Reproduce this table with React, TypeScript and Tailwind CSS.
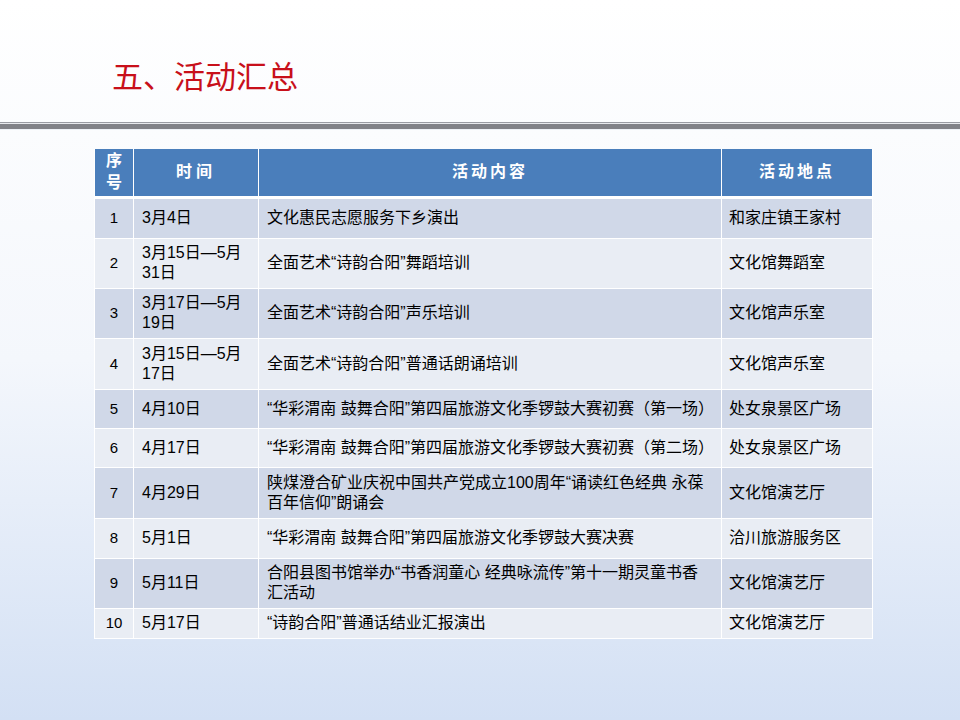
const rows = [
  { no: "1", time: "3月4日", content: "文化惠民志愿服务下乡演出", place: "和家庄镇王家村", h: "h-[41px]" },
  { no: "2", time: "3月15日—5月31日", content: "全面艺术“诗韵合阳”舞蹈培训", place: "文化馆舞蹈室", h: "h-[50px]" },
  { no: "3", time: "3月17日—5月19日", content: "全面艺术“诗韵合阳”声乐培训", place: "文化馆声乐室", h: "h-[50px]" },
  { no: "4", time: "3月15日—5月17日", content: "全面艺术“诗韵合阳”普通话朗诵培训", place: "文化馆声乐室", h: "h-[51px]" },
  { no: "5", time: "4月10日", content: "“华彩渭南 鼓舞合阳”第四届旅游文化季锣鼓大赛初赛（第一场）", place: "处女泉景区广场", h: "h-[39px]" },
  { no: "6", time: "4月17日", content: "“华彩渭南 鼓舞合阳”第四届旅游文化季锣鼓大赛初赛（第二场）", place: "处女泉景区广场", h: "h-[39px]" },
  { no: "7", time: "4月29日", content: "陕煤澄合矿业庆祝中国共产党成立100周年“诵读红色经典 永葆百年信仰”朗诵会", place: "文化馆演艺厅", h: "h-[51px]" },
  { no: "8", time: "5月1日", content: "“华彩渭南 鼓舞合阳”第四届旅游文化季锣鼓大赛决赛", place: "洽川旅游服务区", h: "h-[40px]" },
  { no: "9", time: "5月11日", content: "合阳县图书馆举办“书香润童心 经典咏流传”第十一期灵童书香汇活动", place: "文化馆演艺厅", h: "h-[50px]" },
  { no: "10", time: "5月17日", content: "“诗韵合阳”普通话结业汇报演出", place: "文化馆演艺厅", h: "h-[30px]" },
];

export default function App() {
  return (
    <div
      className="h-[720px] w-[960px] overflow-hidden bg-gradient-to-b from-white via-[#f4f7fc] to-[#d3e0f4]"
      style={{ fontFamily: '"Liberation Sans", "Noto Sans CJK SC", sans-serif' }}
    >
      <div className="pl-[112px] pt-[57px] text-[31px] leading-[42px] text-[#c8101a]">五、活动汇总</div>

      <div className="mt-[23px]">
        <div className="h-px bg-[#9a9ca3]" />
        <div className="h-px bg-[#e8eaee]" />
        <div className="h-[5px] bg-[#818288]" />
        <div className="h-px bg-[#eef1f6]" />
      </div>

      <div className="ml-[94px] mt-[19px] w-[778px]">
        <table className="w-full table-fixed border-collapse text-[16px] leading-[20px] text-black">
          <colgroup>
            <col className="w-[39px]" />
            <col className="w-[125px]" />
            <col className="w-[463px]" />
            <col className="w-[151px]" />
          </colgroup>
          <thead>
            <tr className="h-[48px] bg-[#4a7ebb] font-bold text-white">
              <th className="border-x border-b-[3px] border-white px-0 text-center leading-[22px]">
                <div>序</div>
                <div>号</div>
              </th>
              <th className="border-x border-b-[3px] border-white tracking-[4px]">时间</th>
              <th className="border-x border-b-[3px] border-white tracking-[3px]">活动内容</th>
              <th className="border-x border-b-[3px] border-white tracking-[3px]">活动地点</th>
            </tr>
          </thead>
          <tbody>
            {rows.map((r, i) => (
              <tr key={r.no} className={i % 2 === 0 ? "bg-[#d0d8e8]" : "bg-[#e9edf4]"}>
                <td className={`${r.h} border border-white text-center text-[15px]`}>{r.no}</td>
                <td className="border border-white pl-[8px] pr-[6px]">{r.time}</td>
                <td className="border border-white pl-[8px] pr-[12px]">{r.content}</td>
                <td className="border border-white pl-[7px] pr-[4px]">{r.place}</td>
              </tr>
            ))}
          </tbody>
        </table>
      </div>
    </div>
  );
}
